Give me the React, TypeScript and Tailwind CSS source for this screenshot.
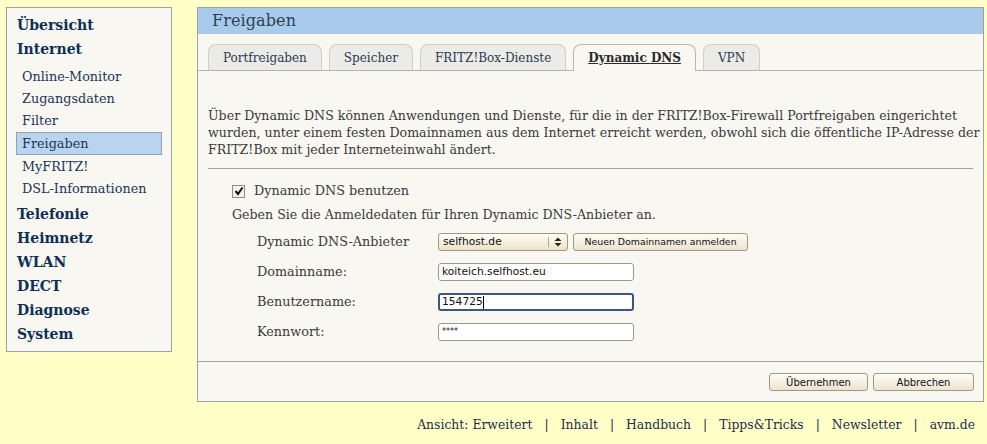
import React from 'react';

const serif = "font-['DejaVu_Serif','Liberation_Serif',serif]";
const sans = "font-['DejaVu_Sans','Liberation_Sans',sans-serif]";

const tabs = ['Portfreigaben', 'Speicher', 'FRITZ!Box-Dienste', 'Dynamic DNS', 'VPN'];

function NavHead({ label }: { label: string }) {
    return <div className="h-6 flex items-center pl-[10px] text-[14px] font-bold text-[#0d2f55]">{label}</div>;
}

function NavSub({ label, active }: { label: string; active?: boolean }) {
    if (active) {
        return (
            <div className="mx-[9px] mb-px h-[23px] flex items-center pl-[5px] bg-[#b9d4ef] border border-[#90a4b8] text-[12.8px] text-[#1b3556]">
                {label}
            </div>
        );
    }
    return <div className="h-[22px] flex items-center pl-[15px] text-[12.8px] text-[#1b3556]">{label}</div>;
}

function Field({ label, children }: { label: string; children: React.ReactNode }) {
    return (
        <div className="h-[30px] flex items-center">
            <div className="w-[206px] pl-[25px] text-[12.8px]">{label}</div>
            {children}
        </div>
    );
}

function TextBox({ value, focused, small }: { value: string; focused?: boolean; small?: boolean }) {
    return (
        <div
            className={`w-[196px] h-[18px] flex items-center rounded-[3px] bg-white text-[#111] ${sans} ${
                small ? 'text-[8px] items-start pt-[2px]' : 'text-[10.7px]'
            } ${focused ? 'border-2 border-[#3e5580] pl-[2px]' : 'border border-[#9a9a8c] pl-[3px]'}`}
        >
            {value}
            {focused && <span className="w-px h-[13px] bg-black" />}
        </div>
    );
}

function Btn({ label, w, size }: { label: string; w: string; size: string }) {
    return (
        <div
            className={`${w} ${size} h-[18px] flex items-center justify-center whitespace-nowrap rounded-[3px] border border-[#a3977d] bg-gradient-to-b from-[#fffdf6] to-[#ece4d0] text-[#111] ${sans}`}
        >
            {label}
        </div>
    );
}

export default function App() {
    return (
        <div className={`w-[987px] h-[444px] bg-[#ffffc8] ${serif} text-[#3a3a3a] flex flex-col`}>
            <div className="flex pt-[7px] pl-[6px] pr-[3px]">
                {/* sidebar */}
                <div className="w-[166px] shrink-0 h-[345px] border border-[#9ba3a0] bg-[#f8f7f2] pt-[5px]">
                    <NavHead label="Übersicht" />
                    <NavHead label="Internet" />
                    <div className="h-[5px]" />
                    <NavSub label="Online-Monitor" />
                    <NavSub label="Zugangsdaten" />
                    <NavSub label="Filter" />
                    <NavSub label="Freigaben" active />
                    <NavSub label="MyFRITZ!" />
                    <NavSub label="DSL-Informationen" />
                    <div className="h-[2px]" />
                    <NavHead label="Telefonie" />
                    <NavHead label="Heimnetz" />
                    <NavHead label="WLAN" />
                    <NavHead label="DECT" />
                    <NavHead label="Diagnose" />
                    <NavHead label="System" />
                </div>

                {/* main panel */}
                <div className="ml-[25px] flex-1 min-w-0 h-[395px] border border-[#9ba3a0] bg-[#f8f7f2] flex flex-col">
                    <div className="h-[26px] bg-[#a9cbeb] flex items-center pl-[14px] text-[16px] tracking-[0.1px] text-[#2d3f55]">
                        Freigaben
                    </div>
                    <div className="mt-[10px] flex items-end gap-[7px] pl-[10px] border-b border-[#b0b4b0] h-[27px]">
                        {tabs.map((t) =>
                            t === 'Dynamic DNS' ? (
                                <div
                                    key={t}
                                    className="h-[27px] -mb-px px-[14px] flex items-center rounded-t-[8px] border border-b-0 border-[#b8b8b0] bg-[#f8f7f2] text-[12px] font-bold underline text-[#2a2a2a]"
                                >
                                    {t}
                                </div>
                            ) : (
                                <div
                                    key={t}
                                    className="h-[26px] px-[14px] flex items-center rounded-t-[8px] border border-b-0 border-[#cfcfc8] bg-[#ebebe8] text-[12px] text-[#2c3a50]"
                                >
                                    {t}
                                </div>
                            )
                        )}
                    </div>

                    <div className="px-[10px] pt-[36px] text-[12.6px] leading-[17px]">
                        <p className="w-[772px]">
                            Über Dynamic DNS können Anwendungen und Dienste, für die in der FRITZ!Box-Firewall Portfreigaben eingerichtet
                            wurden, unter einem festen Domainnamen aus dem Internet erreicht werden, obwohl sich die öffentliche IP-Adresse der
                            FRITZ!Box mit jeder Interneteinwahl ändert.
                        </p>
                        <div className="mt-[10px] border-t border-[#9aa69e]" />
                    </div>

                    <div className="pl-[34px] pt-[10px] text-[12.8px]">
                        <div className="h-[24px] flex items-center gap-[9px]">
                            <span className="w-[13px] h-[13px] border border-[#8d8d80] bg-[#f4f2ea] flex items-center justify-center">
                                <svg width="10" height="10" viewBox="0 0 10 10">
                                    <path d="M1.5 5 L4 8 L8.5 1.5" fill="none" stroke="#111" strokeWidth="2" />
                                </svg>
                            </span>
                            <span>Dynamic DNS benutzen</span>
                        </div>
                        <div className="h-[24px] flex items-center text-[12.6px]">Geben Sie die Anmeldedaten für Ihren Dynamic DNS-Anbieter an.</div>
                        <Field label="Dynamic DNS-Anbieter">
                            <div
                                className={`w-[130px] h-[18px] flex items-center rounded-[3px] border border-[#a3977d] bg-gradient-to-b from-[#fffdf6] to-[#ece2c8] text-[10.7px] text-[#111] ${sans}`}
                            >
                                <span className="flex-1 pl-[4px]">selfhost.de</span>
                                <span className="w-px h-[10px] bg-[#b0a890]" />
                                <svg width="18" height="14" viewBox="0 0 18 14">
                                    <path d="M5.5 6 L9 2.5 L12.5 6 Z M5.5 8 L9 11.5 L12.5 8 Z" fill="#222" />
                                </svg>
                            </div>
                            <div className="ml-[5px]">
                                <Btn label="Neuen Domainnamen anmelden" w="w-[175px]" size="text-[9.4px]" />
                            </div>
                        </Field>
                        <Field label="Domainname:">
                            <TextBox value="koiteich.selfhost.eu" />
                        </Field>
                        <Field label="Benutzername:">
                            <TextBox value="154725" focused />
                        </Field>
                        <Field label="Kennwort:">
                            <TextBox value="****" small />
                        </Field>
                    </div>

                    <div className="mt-auto border-t border-[#9aa69e] h-[40px] flex items-center justify-end gap-[5px] pr-[9px] pt-[1px]">
                        <Btn label="Übernehmen" w="w-[99px]" size="text-[10px]" />
                        <Btn label="Abbrechen" w="w-[101px]" size="text-[10px]" />
                    </div>
                </div>
            </div>

            <div className="flex-1 flex items-center justify-end pr-[12px] pt-[4px] text-[12.4px] text-[#1d2d4c]">
                {['Ansicht: Erweitert', 'Inhalt', 'Handbuch', 'Tipps&Tricks', 'Newsletter', 'avm.de'].map((l, i) => (
                    <React.Fragment key={l}>
                        {i > 0 && <span className="px-[12px]">|</span>}
                        <span>{l}</span>
                    </React.Fragment>
                ))}
            </div>
        </div>
    );
}
